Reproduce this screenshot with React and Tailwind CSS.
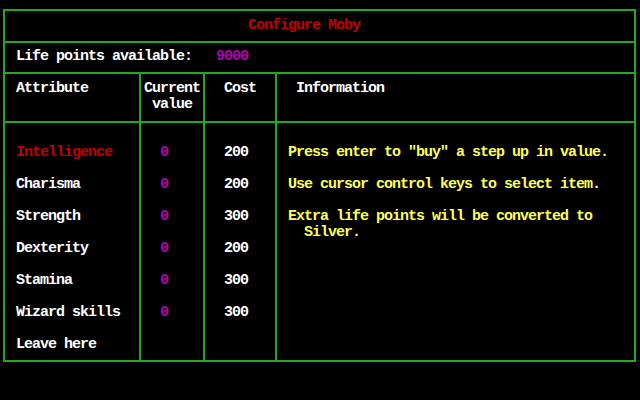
const attributes = [
  { name: "Intelligence", value: "0", cost: "200", active: true },
  { name: "Charisma", value: "0", cost: "200" },
  { name: "Strength", value: "0", cost: "300" },
  { name: "Dexterity", value: "0", cost: "200" },
  { name: "Stamina", value: "0", cost: "300" },
  { name: "Wizard skills", value: "0", cost: "300" },
];

export default function App() {
  return (
    <div
      className="w-[640px] h-[400px] bg-black pt-[9px] pl-[3px] text-[15px] leading-[16px] font-bold tracking-[-1px] text-white"
      style={{ fontFamily: '"Liberation Mono", "DejaVu Sans Mono", monospace' }}
    >
      <div className="w-[633px] h-[353px] border-2 border-[#22a822] flex flex-col">
        {/* title */}
        <div className="h-[32px] border-b-2 border-[#22a822] pt-[7px] pl-[243px] text-[#c00000] whitespace-pre">
          Configure Moby
        </div>

        {/* life points */}
        <div className="h-[31px] border-b-2 border-[#22a822] pt-[6px] pl-[11px] flex whitespace-pre">
          <span className="w-[200px]">Life points available:</span>
          <span className="text-[#b000b0]">9000</span>
        </div>

        {/* table */}
        <div className="flex flex-1">
          <div className="w-[136px] border-r-2 border-[#22a822] flex flex-col">
            <div className="h-[49px] border-b-2 border-[#22a822] pt-[7px] pl-[11px]">Attribute</div>
            <div className="pt-[22px] pl-[11px] flex flex-col">
              {attributes.map((a) => (
                <div key={a.name} className={`h-[32px] whitespace-pre ${a.active ? "text-[#c00000]" : ""}`}>
                  {a.name}
                </div>
              ))}
              <div className="h-[16px] whitespace-pre">Leave here</div>
            </div>
          </div>

          <div className="w-[64px] border-r-2 border-[#22a822] flex flex-col">
            <div className="h-[49px] border-b-2 border-[#22a822] pt-[7px] pl-[3px] flex flex-col whitespace-pre">
              <span>Current</span>
              <span className="pl-[8px]">value</span>
            </div>
            <div className="pt-[22px] pl-[19px] flex flex-col text-[#b000b0]">
              {attributes.map((a) => (
                <div key={a.name} className="h-[32px]">{a.value}</div>
              ))}
            </div>
          </div>

          <div className="w-[72px] border-r-2 border-[#22a822] flex flex-col">
            <div className="h-[49px] border-b-2 border-[#22a822] pt-[7px] pl-[19px]">Cost</div>
            <div className="pt-[22px] pl-[19px] flex flex-col">
              {attributes.map((a) => (
                <div key={a.name} className="h-[32px]">{a.cost}</div>
              ))}
            </div>
          </div>

          <div className="flex-1 flex flex-col">
            <div className="h-[49px] border-b-2 border-[#22a822] pt-[7px] pl-[19px]">Information</div>
            <div className="pt-[22px] pl-[11px] flex flex-col text-[#ffff55] whitespace-pre">
              <div className="h-[32px]">Press enter to "buy" a step up in value.</div>
              <div className="h-[32px]">Use cursor control keys to select item.</div>
              <div>Extra life points will be converted to</div>
              <div className="pl-[16px]">Silver.</div>
            </div>
          </div>
        </div>
      </div>
    </div>
  );
}
